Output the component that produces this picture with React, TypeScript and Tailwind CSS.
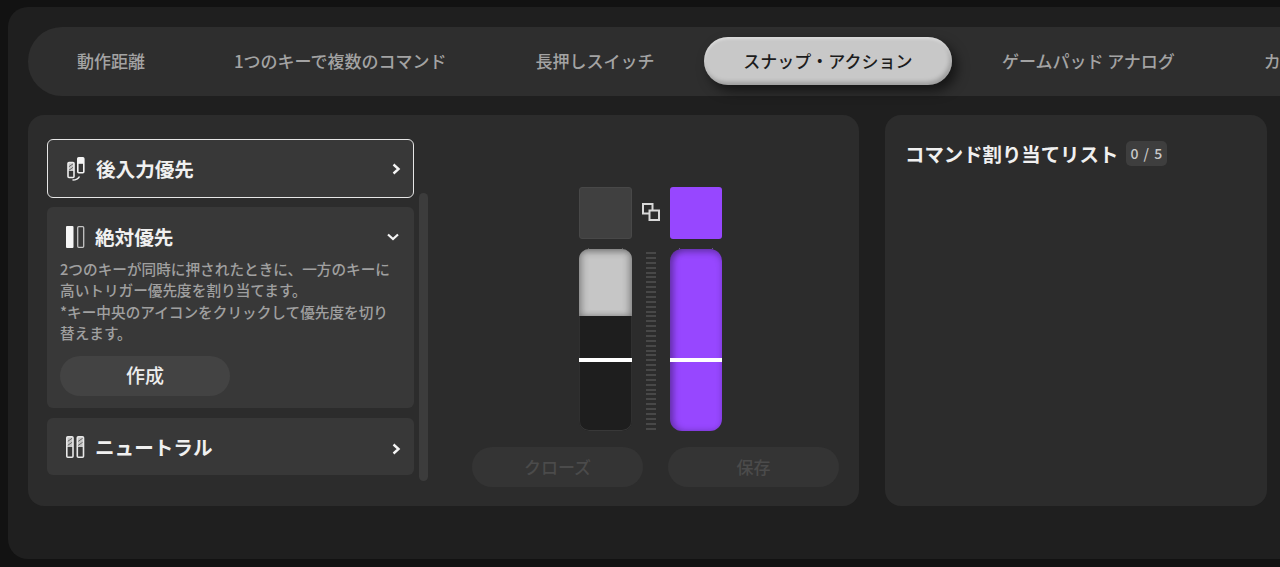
import React from "react";

const FONT = "[font-family:'Noto_Sans_CJK_JP','Noto_Sans',sans-serif]";

function LastIcon() {
  return (
    <svg width="18" height="24" viewBox="0 0 18 24" fill="none" className="shrink-0">
      <path d="M1 6h6v8H1z" fill="#c9c9c9" />
      <path d="M1.5 10 6.5 6.5M1.5 13.5l5-3.5" stroke="#4a4a4a" strokeWidth="0.8" />
      <rect x="1" y="5.5" width="6" height="15" rx="1" stroke="#eeeeee" strokeWidth="1.6" />
      <rect x="10.8" y="0.8" width="6" height="15" rx="1" stroke="#f4f4f4" strokeWidth="1.6" />
      <rect x="10.8" y="0.8" width="6" height="6" fill="#f4f4f4" />
      <path d="M5.5 23c3.4 0 5.6-.8 7-3.5" stroke="#eeeeee" strokeWidth="1.5" />
    </svg>
  );
}

function AbsIcon() {
  return (
    <svg width="19" height="22" viewBox="0 0 19 22" fill="none" className="shrink-0">
      <rect x="0" y="0" width="7.5" height="22" rx="1" fill="#f6f6f6" />
      <rect x="11.7" y="0.7" width="6" height="20.6" rx="1" stroke="#c4c4c4" strokeWidth="1.3" />
    </svg>
  );
}

function NeutralIcon() {
  return (
    <svg width="19" height="22" viewBox="0 0 19 22" fill="none" className="shrink-0">
      <path d="M1 1h6v10H1zM11.5 1h6v10h-6z" fill="#c4c4c4" />
      <path d="M1.5 5.5 6.5 2M1.5 9.5l5-3.5M12 5.5 17 2M12 9.5l5-3.5" stroke="#4a4a4a" strokeWidth="0.8" />
      <rect x="0.8" y="0.8" width="6.2" height="20.4" rx="1" stroke="#e8e8e8" strokeWidth="1.6" />
      <rect x="11.3" y="0.8" width="6.2" height="20.4" rx="1" stroke="#e8e8e8" strokeWidth="1.6" />
    </svg>
  );
}

function ChevronRight() {
  return (
    <svg width="9" height="12" viewBox="0 0 9 12" fill="none">
      <path d="M1.5 1.5 6.5 6l-5 4.5" stroke="#f4f4f4" strokeWidth="2.4" />
    </svg>
  );
}

function ChevronDown() {
  return (
    <svg width="12" height="8" viewBox="0 0 12 8" fill="none">
      <path d="M1 1.5 6 6l5-4.5" stroke="#f4f4f4" strokeWidth="2.2" />
    </svg>
  );
}

const tabs = ["動作距離", "1つのキーで複数のコマンド", "長押しスイッチ", "スナップ・アクション", "ゲームパッド アナログ", "カスタム"];

const ticks = Array.from({ length: 37 }, (_, i) => i);

export default function App() {
  return (
    <div className={`h-[567px] w-[1280px] overflow-hidden bg-[#121212] pl-[8px] pt-[7px] ${FONT}`}>
      <div className="h-[552px] w-[1400px] rounded-[20px] bg-[#1f1f1f] pl-[20px] pt-[20px]">
        <div className="flex h-[69px] w-[1372px] items-start gap-[10.9px] rounded-[34px] bg-[#2e2e2e] pl-[10px] pt-[10px]">
          {tabs.map((t, i) => (
            <div
              key={t}
              className={
                i === 3
                  ? "flex h-[48px] shrink-0 items-center whitespace-nowrap rounded-full bg-[#c8c8c8] pl-[39px] pr-[39.5px] text-[17px] font-medium text-[#1c1c1c] shadow-[inset_0_2px_3px_rgba(255,255,255,0.4),inset_-2px_-3px_4px_rgba(0,0,0,0.22),5px_6px_12px_rgba(0,0,0,0.55)]"
                  : "flex h-[48px] shrink-0 items-center whitespace-nowrap px-[39px] text-[17px] font-medium text-[#a3a3a3]"
              }
            >
              {t}
            </div>
          ))}
        </div>

        <div className="mt-[19px] flex gap-[26px]">
          <div className="flex h-[391px] w-[831px] items-start rounded-[16px] bg-[#2c2c2c] pl-[19px] pt-[24px]">
            <div className="w-[367px]">
              <div className="flex h-[59px] items-center rounded-[6px] border border-[#e6e6e6] bg-[#383838] pl-[19px] pr-[12px]">
                <LastIcon />
                <span className="ml-[11px] text-[19.6px] font-bold text-[#f0f0f0]">後入力優先</span>
                <span className="ml-auto flex"><ChevronRight /></span>
              </div>

              <div className="mt-[9px] h-[201px] rounded-[6px] bg-[#383838] px-[13px] pt-[17px]">
                <div className="flex h-[25px] items-center pl-[6px] pr-[2px]">
                  <AbsIcon />
                  <span className="ml-[10px] text-[19.6px] font-bold text-[#f0f0f0]">絶対優先</span>
                  <span className="ml-auto flex"><ChevronDown /></span>
                </div>
                <p className="mt-[9px] whitespace-nowrap text-[14.65px] font-medium leading-[21.4px] text-[#a0a0a0]">
                  2つのキーが同時に押されたときに、一方のキーに
                  <br />
                  高いトリガー優先度を割り当てます。
                  <br />
                  *キー中央のアイコンをクリックして優先度を切り
                  <br />
                  替えます。
                </p>
                <div className="mt-[12px] flex h-[40px] w-[170px] items-center justify-center rounded-full bg-[#434343] text-[19px] font-medium text-[#ededed]">
                  作成
                </div>
              </div>

              <div className="mt-[10px] flex h-[57px] items-center rounded-[6px] bg-[#383838] pl-[19px] pr-[13px]">
                <NeutralIcon />
                <span className="ml-[10px] text-[19.6px] font-bold text-[#f0f0f0]">ニュートラル</span>
                <span className="ml-auto mt-[4px] flex"><ChevronRight /></span>
              </div>
            </div>

            <div className="ml-[5px] mt-[54px] h-[288px] w-[9px] rounded-full bg-[#3c3c3c]" />

            <div className="ml-[44px] flex w-[367px] flex-col pt-[48px]">
              <div className="ml-[107px] flex w-[143px] items-start justify-between">
                <div className="flex w-[53px] flex-col">
                  <div className="h-[52px] rounded-[3px] border border-[#484848] bg-[#404040]" />
                  <div className="mt-[9px] flex h-[1px] justify-between px-[9px]">
                    <div className="w-[1px] bg-[#5a5a5a]" />
                    <div className="w-[1px] bg-[#5a5a5a]" />
                  </div>
                  <div className="flex h-[182px] flex-col overflow-hidden rounded-[10px]">
                    <div className="h-[67px] shrink-0 bg-[#c6c6c6] shadow-[inset_0_4px_6px_rgba(0,0,0,0.2),inset_4px_0_6px_rgba(0,0,0,0.2),inset_-4px_0_6px_rgba(0,0,0,0.2)]" />
                    <div className="h-[115px] rounded-b-[10px] bg-[#1e1e1e] pt-[42px] shadow-[inset_0_-1px_0_#383838,inset_1px_0_0_#303030,inset_-1px_0_0_#303030]">
                      <div className="h-[4px] bg-white" />
                    </div>
                  </div>
                </div>

                <div className="flex w-[18px] flex-col items-center">
                  <svg width="18" height="18" viewBox="0 0 18 18" fill="none" className="mt-[16px]">
                    <rect x="1" y="1" width="9.5" height="9.5" stroke="#d8d8d8" strokeWidth="2" />
                    <rect x="7.5" y="7.5" width="9.5" height="9.5" fill="#2c2c2c" stroke="#d8d8d8" strokeWidth="2" />
                  </svg>
                  <div className="mt-[31px] flex h-[178px] w-[10px] flex-col justify-between">
                    {ticks.map((i) => (
                      <div key={i} className="h-[2px] bg-[#484848]" />
                    ))}
                  </div>
                </div>

                <div className="flex w-[52px] flex-col">
                  <div className="h-[52px] rounded-[3px] bg-[#9747ff]" />
                  <div className="mt-[9px] flex h-[1px] justify-between px-[9px]">
                    <div className="w-[1px] bg-[#6a5a80]" />
                    <div className="w-[1px] bg-[#6a5a80]" />
                  </div>
                  <div className="flex h-[182px] flex-col overflow-hidden rounded-[12px] bg-[#9747ff] shadow-[inset_4px_0_6px_rgba(0,0,0,0.25),inset_0_4px_6px_rgba(0,0,0,0.2)]">
                    <div className="mt-[109px] h-[4px] shrink-0 bg-white" />
                  </div>
                </div>
              </div>

              <div className="mt-[16px] flex justify-between">
                <div className="flex h-[40px] w-[171px] items-center justify-center rounded-full bg-[#343434] text-[17px] font-medium text-[#4b4b4b]">
                  クローズ
                </div>
                <div className="flex h-[40px] w-[171px] items-center justify-center rounded-full bg-[#343434] text-[17px] font-medium text-[#4b4b4b]">
                  保存
                </div>
              </div>
            </div>
          </div>

          <div className="h-[391px] w-[382px] rounded-[16px] bg-[#2c2c2c] pl-[20px] pt-[24px]">
            <div className="flex items-center">
              <span className="text-[19.4px] font-bold text-[#f0f0f0]">コマンド割り当てリスト</span>
              <span className="ml-[8px] flex h-[25px] w-[41px] items-center justify-center rounded-[5px] bg-[#3e3e3e] text-[14px] font-medium tracking-[1px] text-[#c8c8c8]">
                0 / 5
              </span>
            </div>
          </div>
        </div>
      </div>
    </div>
  );
}
